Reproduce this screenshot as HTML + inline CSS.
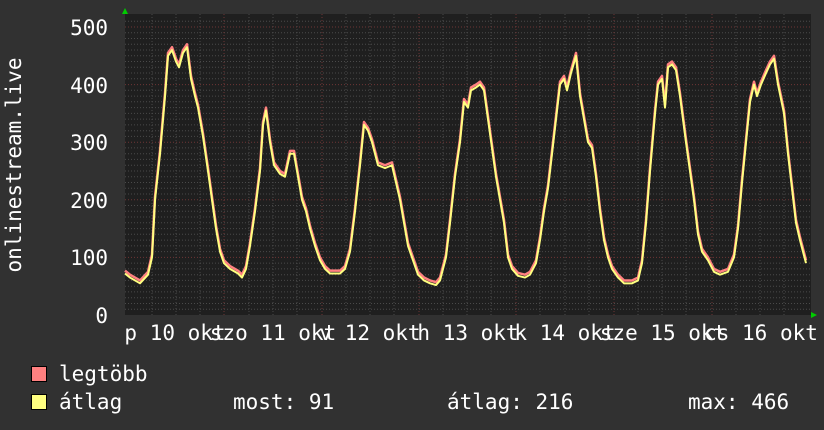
<!DOCTYPE html>
<html><head><meta charset="utf-8"><style>
html,body{margin:0;padding:0;background:#313131;}
svg{display:block}
text{font-family:"DejaVu Sans Mono","Liberation Mono",monospace;fill:#fff;font-size:21px}
</style></head><body>
<svg width="824" height="430" viewBox="0 0 824 430" xmlns="http://www.w3.org/2000/svg">
<rect width="824" height="430" fill="#313131"/>
<rect x="125" y="14" width="686" height="301" fill="#1f1f1f"/>
<g stroke="#4a4a4a" stroke-width="1" stroke-dasharray="1,2">
<path d="M125 309.2H811M125 303.5H811M125 297.7H811M125 291.9H811M125 286.2H811M125 280.4H811M125 274.7H811M125 268.9H811M125 263.1H811M125 251.6H811M125 245.9H811M125 240.1H811M125 234.3H811M125 228.6H811M125 222.8H811M125 217H811M125 211.3H811M125 205.5H811M125 194H811M125 188.3H811M125 182.5H811M125 176.7H811M125 171H811M125 165.2H811M125 159.4H811M125 153.7H811M125 147.9H811M125 136.4H811M125 130.7H811M125 124.9H811M125 119.1H811M125 113.4H811M125 107.6H811M125 101.8H811M125 96.1H811M125 90.3H811M125 78.8H811M125 73H811M125 67.3H811M125 61.5H811M125 55.8H811M125 50H811M125 44.2H811M125 38.5H811M125 32.7H811M125 21.2H811"/>
<path d="M152 14V315M176 14V315M200 14V315M249 14V315M273 14V315M297 14V315M346 14V315M370 14V315M394 14V315M443 14V315M467 14V315M491 14V315M540 14V315M565 14V315M589 14V315M638 14V315M662 14V315M686 14V315M736 14V315M760 14V315M784 14V315"/>
</g>
<g stroke="#6e3636" stroke-width="1" stroke-dasharray="1,2">
<path d="M125 257.4H811M125 199.8H811M125 142.2H811M125 84.6H811M125 27H811"/>
<path d="M224 14V315M322 14V315M419 14V315M516 14V315M614 14V315M712 14V315"/>
</g>
<g transform="translate(0,315) scale(1,-0.576)" fill="none" stroke-linejoin="round">
<polyline vector-effect="non-scaling-stroke" stroke="#ff8080" stroke-width="2.5" transform="translate(0,5)" points="125,72 130,65 140,55 148,70 152,100 155,200 160,280 165,380 168,450 172,460 176,440 179,430 183,455 187,465 191,410 195,380 198,360 203,310 208,250 212,200 216,150 220,110 224,90 230,80 238,72 242,65 246,80 250,120 255,180 260,250 263,330 266,355 270,300 274,260 280,245 285,240 290,280 294,280 298,240 302,200 306,180 310,150 315,120 320,95 325,80 330,72 340,72 345,80 350,110 355,180 360,260 364,330 368,320 372,300 378,260 385,255 392,260 396,230 400,200 404,160 408,120 412,100 418,70 424,60 430,55 436,52 440,60 446,100 450,160 455,240 460,300 464,370 468,360 471,390 476,395 480,400 484,390 488,340 492,290 496,240 500,200 504,160 508,100 512,80 518,68 525,65 530,70 536,90 540,130 544,180 548,220 552,280 556,340 560,400 564,410 567,390 571,420 576,450 580,380 584,340 588,300 592,290 596,240 600,180 604,130 608,100 612,80 618,65 624,55 632,55 638,60 642,90 646,160 650,250 655,350 658,400 662,410 665,360 668,430 672,435 676,425 680,380 686,300 690,250 694,200 698,140 702,110 708,95 714,75 720,70 728,75 734,100 738,150 742,230 746,300 750,370 754,400 757,380 761,400 766,420 770,435 774,445 778,400 784,350 788,280 792,220 796,160 800,130 806,90"/>
<polyline vector-effect="non-scaling-stroke" stroke="#ffff80" stroke-width="2" points="125,72 130,65 140,55 148,70 152,100 155,200 160,280 165,380 168,450 172,460 176,440 179,430 183,455 187,465 191,410 195,380 198,360 203,310 208,250 212,200 216,150 220,110 224,90 230,80 238,72 242,65 246,80 250,120 255,180 260,250 263,330 266,355 270,300 274,260 280,245 285,240 290,280 294,280 298,240 302,200 306,180 310,150 315,120 320,95 325,80 330,72 340,72 345,80 350,110 355,180 360,260 364,330 368,320 372,300 378,260 385,255 392,260 396,230 400,200 404,160 408,120 412,100 418,70 424,60 430,55 436,52 440,60 446,100 450,160 455,240 460,300 464,370 468,360 471,390 476,395 480,400 484,390 488,340 492,290 496,240 500,200 504,160 508,100 512,80 518,68 525,65 530,70 536,90 540,130 544,180 548,220 552,280 556,340 560,400 564,410 567,390 571,420 576,450 580,380 584,340 588,300 592,290 596,240 600,180 604,130 608,100 612,80 618,65 624,55 632,55 638,60 642,90 646,160 650,250 655,350 658,400 662,410 665,360 668,430 672,435 676,425 680,380 686,300 690,250 694,200 698,140 702,110 708,95 714,75 720,70 728,75 734,100 738,150 742,230 746,300 750,370 754,400 757,380 761,400 766,420 770,435 774,445 778,400 784,350 788,280 792,220 796,160 800,130 806,90"/>
</g>
<polygon points="122,14 128,14 125,8" fill="#00cc00"/>
<polygon points="811,312 811,318 817,315" fill="#00cc00"/>
<g text-anchor="end">
<text x="108" y="35">500</text><text x="108" y="93">400</text><text x="108" y="150">300</text><text x="108" y="208">200</text><text x="108" y="265">100</text><text x="108" y="323">0</text>
</g>
<text transform="translate(21,165) rotate(-90)" text-anchor="middle">onlinestream.live</text>
<g text-anchor="middle">
<text x="175" y="340">p 10 okt</text><text x="273" y="340">szo 11 okt</text><text x="370" y="340">v 12 okt</text><text x="468" y="340">h 13 okt</text><text x="565" y="340">k 14 okt</text><text x="663" y="340">sze 15 okt</text><text x="761" y="340">cs 16 okt</text>
</g>
<rect x="31.5" y="366.5" width="15" height="15" fill="#ff8080" stroke="#000"/>
<rect x="31.5" y="394.5" width="15" height="15" fill="#ffff80" stroke="#000"/>
<text x="59" y="381">legtöbb</text>
<text x="59" y="409">átlag</text>
<text x="233" y="409">most: 91</text>
<text x="447" y="409">átlag: 216</text>
<text x="688" y="409">max: 466</text>
</svg>
</body></html>
